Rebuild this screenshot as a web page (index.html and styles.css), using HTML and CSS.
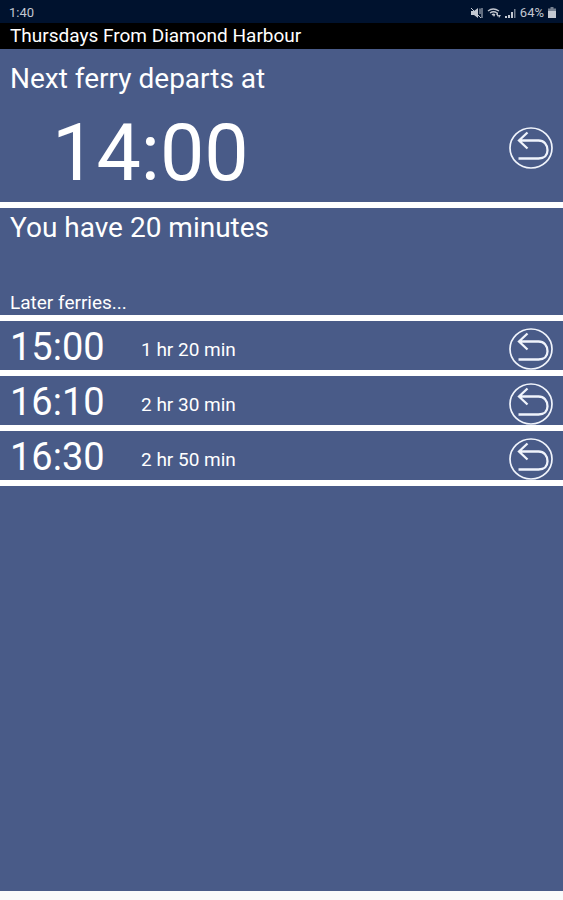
FILE: index.html
```html
<!DOCTYPE html>
<html lang="en">
<head>
<meta charset="utf-8">
<meta name="viewport" content="width=device-width, initial-scale=1">
<title>Thursdays From Diamond Harbour</title>
<link rel="stylesheet" href="styles.css">
</head>
<body>
<svg class="defs" aria-hidden="true">
  <symbol id="return" viewBox="0 0 44 42">
    <ellipse cx="22" cy="21" rx="21" ry="20" stroke-width="1.7"/>
    <path d="M9.500 31.500H29.500C35.500 31.500 38.500 28 38.500 23.300C38.500 17.500 35 13.500 29.500 13.500H10.500M18.500 5.500L10 13.500L18.500 21.500" stroke-width="2.300"/>
  </symbol>
</svg>
<div class="status">
  <span>1:40</span>
  <div class="indicators">
    <svg class="mute" viewBox="0 0 13 12" aria-hidden="true">
      <path d="M1 4H4L8 1V11L4 8H1Z" fill="currentColor"/>
      <path d="M1 1L11 11M10 1.500V7M12 1V11" fill="none" stroke="currentColor"/>
    </svg>
    <svg class="wifi" viewBox="0 0 14 12" aria-hidden="true">
      <path d="M1 4Q6 0 12 4M3 6Q6.500 3.500 10 6M5 8Q6.500 6.500 8 8" fill="none" stroke="currentColor" stroke-width="1.300"/>
      <path d="M6 8L7 10L8 8ZM9 7L11 5V10ZM11 8H14L12 11Z" fill="currentColor"/>
    </svg>
    <svg class="signal" viewBox="0 0 11 12" aria-hidden="true">
      <path d="M0 9H2V11H0ZM3 8H5V11H3ZM6 5H8V11H6Z" fill="currentColor"/>
      <path d="M9 2H10.500V11H9Z" fill="currentColor" opacity=".6"/>
    </svg>
    <span class="percent">64%</span>
    <svg class="battery" viewBox="0 0 8 12" aria-hidden="true">
      <path d="M2.500 0H5.500V1.500H8V11H0V1.500H2.500Z" fill="currentColor" opacity=".6"/>
      <path d="M0 4H8V11H0Z" fill="currentColor"/>
    </svg>
  </div>
</div>
<header class="title"><h1>Thursdays From Diamond Harbour</h1></header>
<main>
  <section class="next">
    <h2>Next ferry departs at</h2>
    <div class="departure">
      <time class="big-time">14:00</time>
      <button class="return" aria-label="Return ferries after 14:00"><svg><use href="#return"/></svg></button>
    </div>
  </section>
  <section class="remaining">
    <h2>You have 20 minutes</h2>
    <p>Later ferries...</p>
  </section>
  <ul class="later">
    <li><time>15:00</time><span>1 hr 20 min</span><button class="return" aria-label="Return ferries after 15:00"><svg><use href="#return"/></svg></button></li>
    <li><time>16:10</time><span>2 hr 30 min</span><button class="return" aria-label="Return ferries after 16:10"><svg><use href="#return"/></svg></button></li>
    <li><time>16:30</time><span>2 hr 50 min</span><button class="return" aria-label="Return ferries after 16:30"><svg><use href="#return"/></svg></button></li>
  </ul>
</main>
</body>
</html>
```
FILE: styles.css
```css
* {
  box-sizing: border-box;
}

body {
  margin: 0;
  min-height: 100vh;
  display: flex;
  flex-direction: column;
  background: #fafafa;
  color: #fff;
  font-family: Roboto, sans-serif;
}

h1,
h2,
p,
ul {
  margin: 0;
  padding: 0;
  font-weight: 400;
}

.defs {
  position: absolute;
  width: 0;
  height: 0;
}

.status {
  display: flex;
  justify-content: space-between;
  align-items: center;
  padding: 2px 7px 0 9px;
  height: 23px;
  background: #00122e;
  color: #c3c8d1;
  font-size: 13px;
}

.indicators {
  display: flex;
  align-items: center;
  gap: 4px;
}

.indicators svg {
  height: 12px;
}

.mute {
  width: 13px;
}

.wifi {
  width: 14px;
}

.signal {
  width: 11px;
}

.battery {
  width: 8px;
}

.title {
  padding: 0 10px;
  background: #000;
}

.title h1 {
  font-size: 19px;
  line-height: 26px;
}

main {
  flex: 1;
  margin-bottom: 9px;
  background: #495b88;
}

h2 {
  font-size: 28px;
  line-height: 40px;
}

.next {
  padding: 10px 10px 1px;
  border-bottom: 6px solid #fff;
}

.departure {
  display: flex;
  justify-content: space-between;
  align-items: center;
  padding-left: 42px;
}

.big-time {
  padding-top: 6px;
  font-size: 79px;
  line-height: 96px;
}

.departure .return {
  margin-bottom: 4px;
}

.return {
  display: block;
  width: 44px;
  height: 42px;
  padding: 0;
  border: 0;
  background: none;
  color: inherit;
}

.return svg {
  display: block;
  width: 100%;
  height: 100%;
  fill: none;
  stroke: #f0f4fc;
}

.remaining {
  display: flex;
  flex-direction: column;
  gap: 43px;
  padding: 0 10px;
  border-bottom: 6px solid #fff;
}

.remaining p {
  font-size: 19px;
  line-height: 24px;
}

.later {
  list-style: none;
}

.later li {
  display: grid;
  grid-template-columns: 131px 1fr auto;
  align-items: center;
  padding: 7px 10px 0;
  border-bottom: 6px solid #fff;
}

.later time {
  font-size: 38px;
  line-height: 38px;
  padding-bottom: 4px;
}

.later span {
  font-size: 19px;
}
```
